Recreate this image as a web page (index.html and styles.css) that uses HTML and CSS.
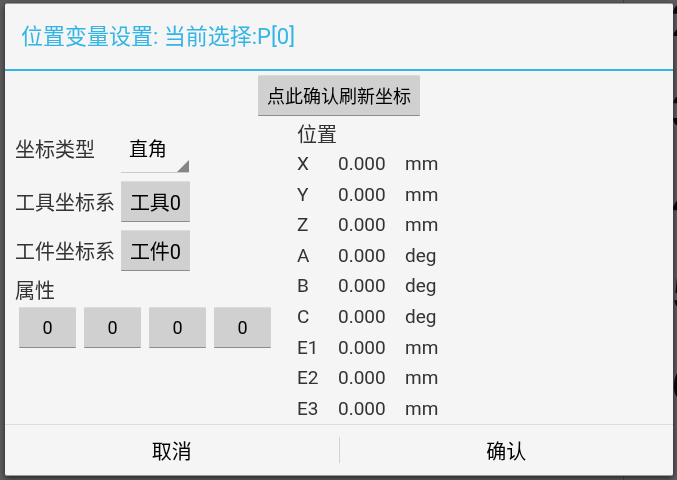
FILE: index.html
```html
<!DOCTYPE html>
<html lang="zh-CN">
<head>
<meta charset="utf-8">
<meta name="viewport" content="width=device-width, initial-scale=1">
<title>位置变量设置</title>
<link rel="stylesheet" href="styles.css">
</head>
<body>
<div class="backdrop" aria-hidden="true">
  <ol class="backdrop-list">
    <li>2</li><li>3</li><li>4</li><li>5</li><li>6</li>
  </ol>
</div>
<main class="dialog" role="dialog" aria-labelledby="title">
  <h1 class="title" id="title">位置变量设置: 当前选择:P[0]</h1>
  <div class="content">
    <button class="btn refresh" type="button">点此确认刷新坐标</button>
    <div class="columns">
      <section class="settings">
        <div class="fields">
          <label for="type">坐标类型</label>
          <span class="spinner">
            <select id="type"><option>直角</option></select>
            <svg class="corner" viewBox="0 0 12 12" aria-hidden="true"><path d="M12 0V12H0Z"/></svg>
          </span>
          <label for="tool">工具坐标系</label>
          <button class="btn frame" id="tool" type="button">工具0</button>
          <label for="work">工件坐标系</label>
          <button class="btn frame" id="work" type="button">工件0</button>
        </div>
        <h2 class="heading">属性</h2>
        <div class="attributes">
          <button class="btn" type="button">0</button>
          <button class="btn" type="button">0</button>
          <button class="btn" type="button">0</button>
          <button class="btn" type="button">0</button>
        </div>
      </section>
      <section class="position">
        <h2 class="heading">位置</h2>
        <table class="axes">
          <tbody>
            <tr><th scope="row">X</th><td>0.000</td><td>mm</td></tr>
            <tr><th scope="row">Y</th><td>0.000</td><td>mm</td></tr>
            <tr><th scope="row">Z</th><td>0.000</td><td>mm</td></tr>
            <tr><th scope="row">A</th><td>0.000</td><td>deg</td></tr>
            <tr><th scope="row">B</th><td>0.000</td><td>deg</td></tr>
            <tr><th scope="row">C</th><td>0.000</td><td>deg</td></tr>
            <tr><th scope="row">E1</th><td>0.000</td><td>mm</td></tr>
            <tr><th scope="row">E2</th><td>0.000</td><td>mm</td></tr>
            <tr><th scope="row">E3</th><td>0.000</td><td>mm</td></tr>
          </tbody>
        </table>
      </section>
    </div>
  </div>
  <footer class="actions">
    <button type="button">取消</button>
    <button type="button">确认</button>
  </footer>
</main>
</body>
</html>
```
FILE: styles.css
```css
* {
  box-sizing: border-box;
}

body {
  margin: 0;
  min-height: 100vh;
  display: flex;
  padding: 3px 4px 4px 5px;
  background: #5e5e5e;
  color: #333;
  font: 20px/30px Roboto, "Noto Sans CJK SC", sans-serif;
}

button,
select {
  font: inherit;
  color: #000;
  border: 0;
  border-radius: 0;
  margin: 0;
  padding: 0;
}

/* Dimmed screen behind the dialog */
.backdrop {
  position: fixed;
  inset: 0;
  overflow: hidden;
}

.backdrop-list {
  position: absolute;
  top: -24px;
  right: 0;
  bottom: 0;
  width: 54px;
  margin: 0;
  padding: 0 0 0 47px;
  border-left: 1px solid #444;
  list-style: none;
  color: #000;
  font-size: 44px;
  line-height: 91px;
}

.dialog {
  position: relative;
  flex: 1;
  display: flex;
  flex-direction: column;
  background: #f5f5f5;
  border-top: 1px solid #999;
  border-bottom: 1px solid #999;
  border-radius: 2px;
  box-shadow: 0 2px 6px #222;
}

.title {
  margin: 0;
  padding: 17px 16px 16px;
  border-bottom: 2px solid #33b5e5;
  color: #33b5e5;
  font-size: 22px;
  line-height: 32px;
  font-weight: 400;
}

.content {
  flex: 1;
  display: flex;
  flex-direction: column;
  align-items: center;
  padding-top: 4px;
}

.btn {
  height: 41px;
  padding-top: 1px;
  background: #d0d0d0;
  border-top: 1px solid #dcdcdc;
  border-bottom: 1px solid #8c8c8c;
  border-radius: 1px;
}

.refresh {
  padding: 2px 9px 0;
  font-size: 18px;
}

.columns {
  flex: 1;
  align-self: stretch;
  display: flex;
  gap: 26px;
  padding: 4px 10px 0;
}

.settings {
  padding-top: 5px;
}

.fields {
  display: grid;
  grid-template-columns: max-content 69px;
  align-items: center;
  column-gap: 6px;
  row-gap: 8px;
}

.fields label {
  padding-top: 2px;
}

.fields .btn {
  padding-top: 2px;
}

.heading {
  margin: 0;
  font-size: 20px;
  line-height: 28px;
  font-weight: 400;
}

.settings .heading {
  margin-top: 6px;
}

.spinner {
  position: relative;
  display: flex;
  width: 68px;
  height: 48px;
  border-bottom: 1px solid #ccc;
}

.spinner select {
  appearance: none;
  width: 100%;
  padding: 2px 0 0 8px;
  background: transparent;
  font-size: 19px;
}

.corner {
  position: absolute;
  right: 0;
  bottom: 0;
  width: 12px;
  height: 12px;
  fill: #868686;
}

.attributes {
  display: grid;
  grid-template-columns: repeat(4, 57px);
  gap: 8px;
  padding: 2px 0 0 4px;
}

.attributes .btn {
  font-size: 18px;
}

.position {
  display: flex;
  flex-direction: column;
  padding-top: 1px;
}

.axes {
  flex: 1;
  border-collapse: collapse;
  font-size: 19px;
  line-height: 30px;
}

.axes th,
.axes td {
  padding: 0;
  font-weight: 400;
  text-align: left;
}

.axes th {
  width: 41px;
}

.axes td {
  width: 67px;
}

.actions {
  display: flex;
  align-items: center;
  height: 51px;
  border-top: 1px solid #ddd;
}

.actions button {
  flex: 1;
  height: 26px;
  background: transparent;
}

.actions button + button {
  border-left: 1px solid #d2d2d2;
}
```
